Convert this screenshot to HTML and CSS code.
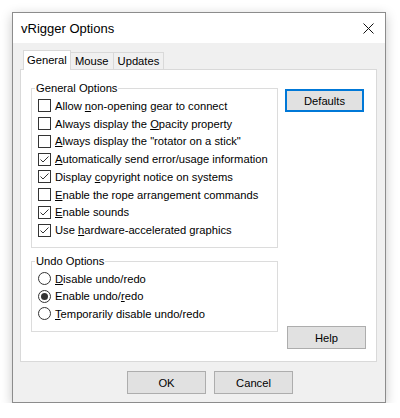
FILE: index.html
```html
<!DOCTYPE html>
<html>
<head>
<meta charset="utf-8">
<link rel="stylesheet" href="styles.css">
</head>
<body>
<div class="window">
  <div class="titlebar">
    <span class="title">vRigger Options</span>
    <svg class="close" width="11" height="11" viewBox="0 0 11 11"><path d="M0.5 0.5 L10.5 10.5 M10.5 0.5 L0.5 10.5" stroke="#111" stroke-width="1" fill="none"/></svg>
  </div>
  <div class="client">
    <div class="tabs">
      <div class="tab selected">General</div>
      <div class="tab">Mouse</div>
      <div class="tab">Updates</div>
    </div>
    <div class="panel">
      <div class="groups">
        <fieldset class="group general">
          <legend>General Options</legend>
          <div class="opt"><span class="box"></span><span class="lbl">Allow <u>n</u>on-opening gear to connect</span></div>
          <div class="opt"><span class="box"></span><span class="lbl">Always display the <u>O</u>pacity property</span></div>
          <div class="opt"><span class="box"></span><span class="lbl"><u>A</u>lways display the "rotator on a stick"</span></div>
          <div class="opt"><span class="box"><svg viewBox="0 0 11 11" width="11" height="11"><path d="M1.5 5.5 L4 8 L9.5 2.5" stroke="#333" stroke-width="1" fill="none"/></svg></span><span class="lbl"><u>A</u>utomatically send error/usage information</span></div>
          <div class="opt"><span class="box"><svg viewBox="0 0 11 11" width="11" height="11"><path d="M1.5 5.5 L4 8 L9.5 2.5" stroke="#333" stroke-width="1" fill="none"/></svg></span><span class="lbl">Display <u>c</u>opyright notice on systems</span></div>
          <div class="opt"><span class="box"></span><span class="lbl"><u>E</u>nable the rope arrangement commands</span></div>
          <div class="opt"><span class="box"><svg viewBox="0 0 11 11" width="11" height="11"><path d="M1.5 5.5 L4 8 L9.5 2.5" stroke="#333" stroke-width="1" fill="none"/></svg></span><span class="lbl"><u>E</u>nable sounds</span></div>
          <div class="opt"><span class="box"><svg viewBox="0 0 11 11" width="11" height="11"><path d="M1.5 5.5 L4 8 L9.5 2.5" stroke="#333" stroke-width="1" fill="none"/></svg></span><span class="lbl">Use <u>h</u>ardware-accelerated graphics</span></div>
        </fieldset>
        <fieldset class="group undo">
          <legend>Undo Options</legend>
          <div class="opt radio-row"><span class="radio"></span><span class="lbl"><u>D</u>isable undo/redo</span></div>
          <div class="opt radio-row"><span class="radio on"></span><span class="lbl">Enable undo/<u>r</u>edo</span></div>
          <div class="opt radio-row"><span class="radio"></span><span class="lbl"><u>T</u>emporarily disable undo/redo</span></div>
        </fieldset>
      </div>
      <div class="side">
        <button class="btn default">Defaults</button>
        <button class="btn help">Help</button>
      </div>
    </div>
    <div class="footer">
      <button class="btn">OK</button>
      <button class="btn">Cancel</button>
    </div>
  </div>
</div>
</body>
</html>
```

FILE: styles.css
```css
html, body {
  margin: 0;
  padding: 0;
  background: #ffffff;
}

body {
  font-family: "Liberation Sans", Arial, sans-serif;
  font-size: 11.2px;
  color: #000;
}

.window {
  margin: 12px 0 0 12px;
  width: 374px;
  height: 391px;
  box-sizing: border-box;
  border: 1px solid #8c8c8c;
  background: #f0f0f0;
  box-shadow: 0 3px 11px rgba(0, 0, 0, 0.22);
  display: flex;
  flex-direction: column;
}

.titlebar {
  height: 30px;
  flex: none;
  background: #ffffff;
  display: flex;
  align-items: center;
  justify-content: space-between;
  padding: 0 11px 0 8px;
}

.title {
  font-size: 13px;
  color: #000;
}

.close {
  display: block;
}

.client {
  flex: 1;
  display: flex;
  flex-direction: column;
  padding: 7px 8px 0 7px;
}

.tabs {
  display: flex;
  align-items: flex-end;
  height: 20px;
  padding-left: 3px;
}

.tab {
  box-sizing: border-box;
  height: 18px;
  line-height: 16px;
  border: 1px solid #d9d9d9;
  border-bottom: none;
  padding: 0 4px;
  margin-left: -1px;
  background: #f0f0f0;
}

.tab.selected {
  height: 20px;
  line-height: 18px;
  width: 48px;
  padding: 0 0 0 3px;
  margin-left: 0;
  background: #ffffff;
  position: relative;
  z-index: 1;
}

.panel {
  margin-top: -1px;
  box-sizing: border-box;
  height: 293px;
  background: #ffffff;
  border: 1px solid #d9d9d9;
  display: flex;
  padding: 11px 10px 12px 10px;
}

.groups {
  width: 247px;
  display: flex;
  flex-direction: column;
}

.group {
  box-sizing: border-box;
  margin: 0;
  border: 1px solid #dcdcdc;
  padding: 2px 0 0 3px;
  min-width: 0;
}

.group legend {
  padding: 0 1px;
  line-height: 14px;
  height: 14px;
}

.group.general {
  height: 167px;
}

.group.undo {
  height: 78px;
  margin-top: 6px;
}

.opt {
  display: flex;
  align-items: center;
  height: 17.75px;
  white-space: nowrap;
}

.radio-row {
  height: 17.5px;
}

.box {
  box-sizing: border-box;
  width: 13px;
  height: 13px;
  border: 1px solid #333333;
  background: #ffffff;
  margin-left: 3px;
  margin-right: 4px;
  flex: none;
}

.box svg {
  display: block;
}

.radio {
  box-sizing: border-box;
  width: 13px;
  height: 13px;
  border: 1px solid #333333;
  border-radius: 50%;
  background: #ffffff;
  margin-left: 3px;
  margin-right: 4px;
  flex: none;
  display: flex;
  align-items: center;
  justify-content: center;
}

.radio.on::after {
  content: "";
  width: 7px;
  height: 7px;
  border-radius: 50%;
  background: #333333;
}

.side {
  margin-left: auto;
  display: flex;
  flex-direction: column;
  justify-content: space-between;
  align-items: flex-end;
  padding-top: 8px;
}

.btn {
  box-sizing: border-box;
  width: 79px;
  height: 23px;
  border: 1px solid #adadad;
  background: #e1e1e1;
  font-family: "Liberation Sans", Arial, sans-serif;
  font-size: 11.2px;
  color: #000;
  padding: 0;
  margin: 0;
}

.btn.default {
  border: 1px solid #0078d7;
  box-shadow: inset 0 0 0 1px #0078d7;
  margin-right: 2px;
}

.footer {
  display: flex;
  gap: 8px;
  padding: 9px 0 0 107px;
}
```
